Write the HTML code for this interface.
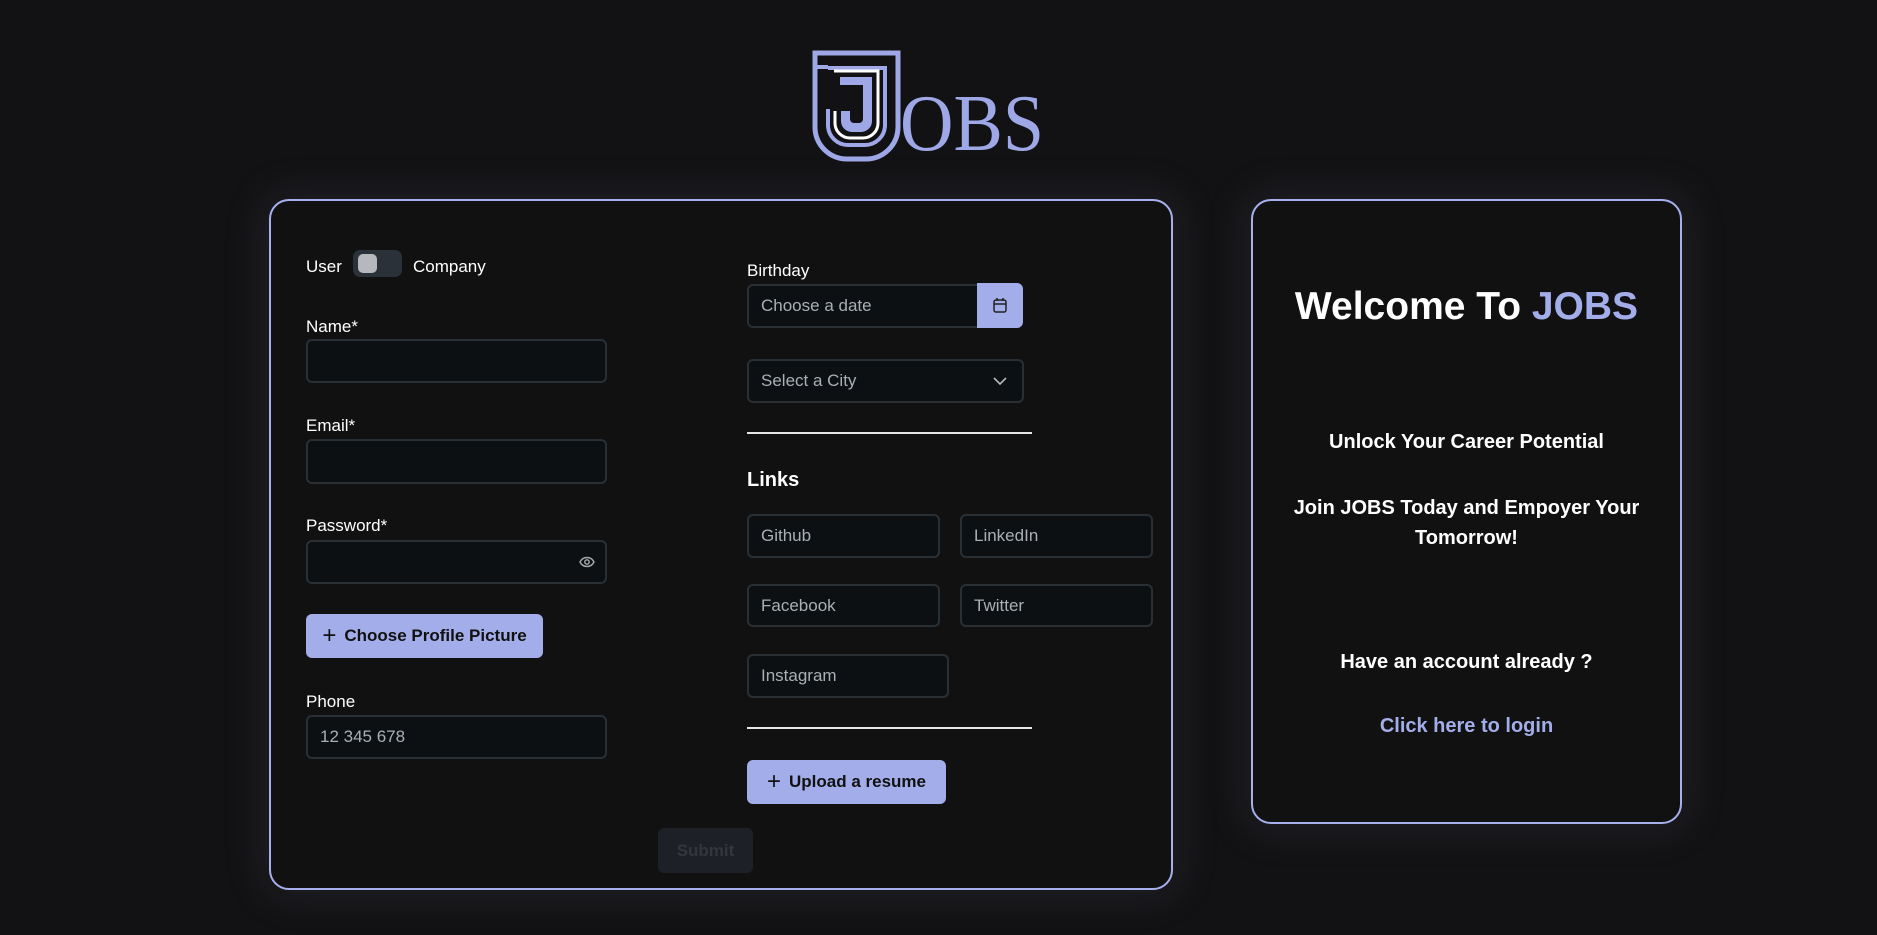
<!DOCTYPE html>
<html><head><meta charset="utf-8"><style>
*{box-sizing:border-box;margin:0;padding:0}
body{width:1877px;height:935px;background:#121214;font-family:"Liberation Sans",sans-serif;color:#fff;position:relative;overflow:hidden}
.a{position:absolute}
.card{position:absolute;background:#111112;border:2px solid #a5b0ec;border-radius:20px;box-shadow:0 0 40px 10px rgba(120,125,160,0.12)}
.lbl{position:absolute;font-size:17px;color:#fff}
.in{position:absolute;background:#0c1013;border:2px solid #283036;border-radius:6px;font-size:17px;color:#a9afb5;padding-left:12px;display:flex;align-items:center}
.btn{position:absolute;background:#a3ade9;border-radius:6px;color:#111;font-size:17px;font-weight:bold;display:flex;align-items:center;justify-content:center;gap:8px}
.c{position:absolute;left:1251px;width:431px;text-align:center;font-weight:bold;font-size:20px}
</style></head><body>
<svg class="a" style="left:810px;top:49px" width="240" height="114" viewBox="0 0 240 114">
<path d="M5 4H88V78A32 32 0 0 1 56 110H37A32 32 0 0 1 5 78V4Z" fill="none" stroke="#9ea8e6" stroke-width="5"/>
<path d="M5 18H18" stroke="#9ea8e6" stroke-width="4"/>
<path d="M18 19H75V76A20 20 0 0 1 55 96H38A20 20 0 0 1 18 76V60" fill="none" stroke="#9ea8e6" stroke-width="4"/>
<path d="M24 22H68V74A15 15 0 0 1 53 89H40A15 15 0 0 1 25 74V62" fill="none" stroke="#fff" stroke-width="3"/>
<path d="M30 28H62V72A11 11 0 0 1 51 83H42A11 11 0 0 1 31 72V62H40V70A4 4 0 0 0 44 74H49A4 4 0 0 0 53 70V36H30Z" fill="#9ea8e6"/>
<text x="90" y="101" font-family="Liberation Serif, serif" font-size="80" fill="#9ea8e6" textLength="144" lengthAdjust="spacingAndGlyphs">OBS</text>
</svg>

<div class="card" style="left:269px;top:199px;width:904px;height:691px"></div>
<div class="card" style="left:1251px;top:199px;width:431px;height:625px"></div>

<div class="lbl" style="left:306px;top:257px">User</div>
<div class="a" style="left:353px;top:250px;width:49px;height:27px;background:#2a3138;border-radius:7px"><div class="a" style="left:5px;top:4px;width:19px;height:19px;background:#b5b8bc;border-radius:5px"></div></div>
<div class="lbl" style="left:413px;top:257px">Company</div>

<div class="lbl" style="left:306px;top:317px">Name*</div>
<div class="in" style="left:306px;top:339px;width:301px;height:44px"></div>
<div class="lbl" style="left:306px;top:416px">Email*</div>
<div class="in" style="left:306px;top:439px;width:301px;height:45px"></div>
<div class="lbl" style="left:306px;top:516px">Password*</div>
<div class="in" style="left:306px;top:540px;width:301px;height:44px"><svg class="a" style="left:271px;top:13px" width="16" height="14" viewBox="0 0 16 14"><path d="M1 7C4 1 12 1 15 7C12 13 4 13 1 7Z" fill="none" stroke="#aaa" stroke-width="1.4"/><circle cx="8" cy="7" r="2.2" fill="none" stroke="#aaa" stroke-width="1.4"/></svg></div>
<div class="btn" style="left:306px;top:614px;width:237px;height:44px"><span style="font-size:24px;font-weight:normal">+</span>Choose Profile Picture</div>
<div class="lbl" style="left:306px;top:692px">Phone</div>
<div class="in" style="left:306px;top:715px;width:301px;height:44px">12 345 678</div>

<div class="lbl" style="left:747px;top:261px">Birthday</div>
<div class="in" style="left:747px;top:284px;width:232px;height:44px;border-radius:6px 0 0 6px">Choose a date</div>
<div class="a" style="left:977px;top:283px;width:46px;height:45px;background:#a3ade9;border-radius:0 6px 6px 0"><svg class="a" style="left:16px;top:14px" width="14" height="16" viewBox="0 0 14 16"><rect x="1" y="3" width="12" height="12" rx="2" fill="none" stroke="#222" stroke-width="1.5"/><path d="M1 7H13M4 1V4M10 1V4" stroke="#222" stroke-width="1.5"/></svg></div>
<div class="in" style="left:747px;top:359px;width:277px;height:44px">Select a City<svg class="a" style="left:244px;top:16px" width="14" height="9" viewBox="0 0 14 9"><path d="M1 1L7 7L13 1" fill="none" stroke="#bbb" stroke-width="1.6"/></svg></div>
<div class="a" style="left:747px;top:432px;width:285px;height:2px;background:#e5e5e5"></div>
<div class="a" style="left:747px;top:469px;font-size:20px;font-weight:bold">Links</div>
<div class="in" style="left:747px;top:514px;width:193px;height:44px">Github</div>
<div class="in" style="left:960px;top:514px;width:193px;height:44px">LinkedIn</div>
<div class="in" style="left:747px;top:584px;width:193px;height:43px">Facebook</div>
<div class="in" style="left:960px;top:584px;width:193px;height:43px">Twitter</div>
<div class="in" style="left:747px;top:654px;width:202px;height:44px">Instagram</div>
<div class="a" style="left:747px;top:727px;width:285px;height:2px;background:#e5e5e5"></div>
<div class="btn" style="left:747px;top:760px;width:199px;height:44px"><span style="font-size:24px;font-weight:normal">+</span>Upload a resume</div>
<div class="btn" style="left:658px;top:828px;width:95px;height:45px;background:#1e2027;color:#33363d">Submit</div>

<div class="c" style="top:285px;font-size:39px">Welcome To <span style="color:#a3ade9">JOBS</span></div>
<div class="c" style="top:431px">Unlock Your Career Potential</div>
<div class="c" style="top:493px;line-height:30px;padding:0 30px">Join JOBS Today and Empoyer Your Tomorrow!</div>
<div class="c" style="top:651px">Have an account already ?</div>
<div class="c" style="top:715px;color:#a3ade9">Click here to login</div>
</body></html>
